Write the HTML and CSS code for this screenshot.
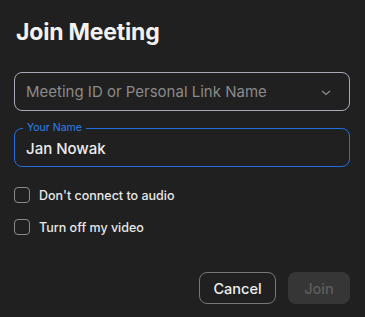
FILE: index.html
```html
<!DOCTYPE html>
<html>
  <head>
    <title>Join Meeting</title>
    <link rel="stylesheet" href="styles.css">
  </head>
  <body>
    <div class="dialog">
      <h1 class="title">Join Meeting</h1>
      <div class="field field-select">
        <span class="placeholder">Meeting ID or Personal Link Name</span>
        <svg class="chevron" width="10" height="6" viewBox="0 0 10 6">
          <polyline points="1,1 5,4.5 9,1" fill="none" stroke="#8c8c8c" stroke-width="1.3"/>
        </svg>
      </div>
      <div class="field field-active">
        <span class="field-label">Your Name</span>
        <span class="value">Jan Nowak</span>
      </div>
      <div class="options">
        <label class="option"><span class="box"></span>Don't connect to audio</label>
        <label class="option"><span class="box"></span>Turn off my video</label>
      </div>
      <div class="actions">
        <button class="btn btn-cancel">Cancel</button>
        <button class="btn btn-join">Join</button>
      </div>
    </div>
  </body>
</html>
```

FILE: styles.css
```css
html, body {
  margin: 0;
  background-color: #202020;
}
.dialog {
  display: flex;
  flex-direction: column;
  padding: 18px 15px 0 14px;
  font-family: Inter, "Liberation Sans", sans-serif;
  color: #ececec;
}
.title {
  margin: 0;
  font-size: 23px;
  line-height: 29px;
  font-weight: 700;
  letter-spacing: -0.2px;
  color: #f2f2f2;
  padding-left: 2px;
}
.field {
  position: relative;
  display: flex;
  align-items: center;
  height: 39px;
  box-sizing: border-box;
  border-radius: 8px;
  padding: 0 11px;
}
.field-select {
  margin-top: 25px;
  border: 1px solid #a9a9b8;
  justify-content: space-between;
}
.placeholder {
  font-size: 15px;
  color: #8a8a8a;
}
.chevron {
  margin-right: 7px;
  margin-top: 2px;
}
.field-active {
  margin-top: 17px;
  border: 1px solid #1f6fe0;
}
.field-label {
  position: absolute;
  left: 8px;
  top: -8px;
  padding: 0 4px;
  font-size: 10.5px;
  line-height: 14px;
  color: #2f80ed;
  background-color: #202020;
}
.value {
  font-size: 15px;
  font-weight: 500;
  color: #ececec;
  margin-top: 2px;
}
.options {
  display: flex;
  flex-direction: column;
  gap: 16px;
  margin-top: 20px;
}
.option {
  display: flex;
  align-items: center;
  gap: 9px;
  font-size: 12.5px;
  font-weight: 500;
  color: #e8e8e8;
}
.box {
  width: 16px;
  height: 16px;
  box-sizing: border-box;
  border: 1px solid #8a8a8a;
  border-radius: 4px;
}
.actions {
  display: flex;
  justify-content: flex-end;
  gap: 12px;
  margin-top: 37px;
}
.btn {
  height: 32px;
  border-radius: 8px;
  font-family: Inter, "Liberation Sans", sans-serif;
  font-size: 14.5px;
  font-weight: 500;
  padding: 0;
}
.btn-cancel {
  width: 77px;
  border: 1px solid #787878;
  background-color: #202020;
  color: #f0f0f0;
}
.btn-join {
  width: 62px;
  border: none;
  background-color: #363636;
  color: #5e5e5e;
}
```
